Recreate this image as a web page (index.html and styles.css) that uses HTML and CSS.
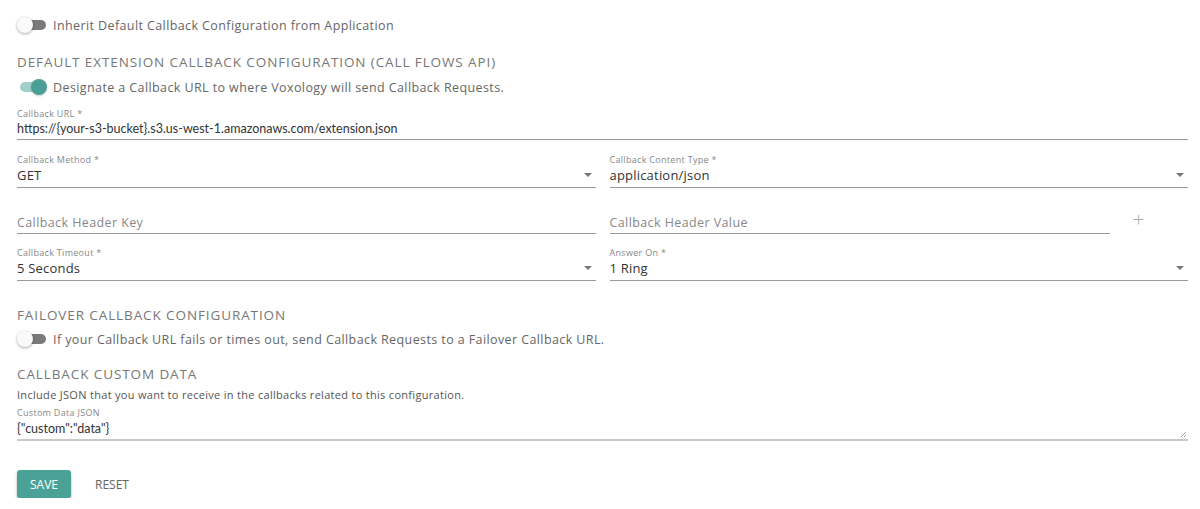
FILE: index.html
```html
<!DOCTYPE html>
<html>
<head>
    <title>Extension Callback Configuration</title>
    <link rel="stylesheet" href="styles.css">
</head>
<body>
<form class="page">
    <label class="switch-row first">
        <span class="switch"><span class="track"></span><span class="knob"></span></span>
        <span class="switch-text">Inherit Default Callback Configuration from Application</span>
    </label>

    <h2 class="section">Default Extension Callback Configuration (Call Flows API)</h2>
    <label class="switch-row">
        <span class="switch on"><span class="track"></span><span class="knob"></span></span>
        <span class="switch-text">Designate a Callback URL to where Voxology will send Callback Requests.</span>
    </label>

    <div class="field url">
        <div class="label">Callback URL *</div>
        <div class="value mono">https://{your-s3-bucket}.s3.us-west-1.amazonaws.com/extension.json</div>
    </div>

    <div class="row method">
        <div class="field select">
            <div class="label">Callback Method *</div>
            <div class="value">GET</div>
            <span class="caret"></span>
        </div>
        <div class="field select">
            <div class="label">Callback Content Type *</div>
            <div class="value">application/json</div>
            <span class="caret"></span>
        </div>
    </div>

    <div class="row header">
        <div class="field">
            <div class="value placeholder">Callback Header Key</div>
        </div>
        <div class="field-plus">
            <div class="field">
                <div class="value placeholder">Callback Header Value</div>
            </div>
            <span class="plus">+</span>
        </div>
    </div>

    <div class="row timeout">
        <div class="field select">
            <div class="label">Callback Timeout *</div>
            <div class="value">5 Seconds</div>
            <span class="caret"></span>
        </div>
        <div class="field select">
            <div class="label">Answer On *</div>
            <div class="value">1 Ring</div>
            <span class="caret"></span>
        </div>
    </div>

    <h2 class="section failover">Failover Callback Configuration</h2>
    <label class="switch-row">
        <span class="switch"><span class="track"></span><span class="knob"></span></span>
        <span class="switch-text">If your Callback URL fails or times out, send Callback Requests to a Failover Callback URL.</span>
    </label>

    <h2 class="section custom">Callback Custom Data</h2>
    <p class="hint">Include JSON that you want to receive in the callbacks related to this configuration.</p>
    <div class="field json">
        <div class="label">Custom Data JSON</div>
        <div class="value mono">{"custom":"data"}</div>
        <svg class="grip" width="7" height="7" viewBox="0 0 7 7"><path d="M6 1 L1 6 M6 4 L4 6" stroke="#999" stroke-width="1"/></svg>
    </div>

    <div class="actions">
        <button type="button" class="btn save">Save</button>
        <button type="button" class="btn reset">Reset</button>
    </div>
</form>
</body>
</html>
```

FILE: styles.css
```css
* { box-sizing: border-box; }
html, body { margin: 0; padding: 0; background: #fff; }
body { font-family: "Open Sans", sans-serif; color: #333; }

.page { display: flex; flex-direction: column; padding: 16px 12px 0 17px; }

/* switches */
.switch-row { display: flex; align-items: center; height: 18px; gap: 6px; }
.switch { position: relative; width: 30px; height: 18px; flex: none; }
.switch .track { position: absolute; left: 3px; top: 4px; width: 26px; height: 10px; border-radius: 5px; background: #7a7a7a; }
.switch .knob { position: absolute; left: 0; top: 1px; width: 16px; height: 16px; border-radius: 50%; background: #fafafa; box-shadow: 0 1px 3px rgba(0,0,0,0.35); }
.switch.on .track { background: #9fd1ca; }
.switch.on .knob { left: 14px; background: #4a9e94; box-shadow: 0 1px 2px rgba(0,0,0,0.2); }
.switch-text { font-size: 12.5px; color: #666; letter-spacing: 0.4px; }

.section { margin: 19px 0 7px; font-size: 13.5px; font-weight: 400; color: #777; text-transform: uppercase; letter-spacing: 0.9px; line-height: 18px; }
.section.failover { margin-top: 25px; margin-bottom: 6px; }
.section.custom { margin-top: 17px; margin-bottom: 2px; }

/* fields */
.field { position: relative; flex: 1; border-bottom: 1px solid #9a9a9a; padding-bottom: 1px; }
.field.select { padding-bottom: 3px; }
.label { font-size: 9px; color: #888; letter-spacing: 0.3px; line-height: 12px; }
.value { font-size: 13px; color: #333; line-height: 18px; letter-spacing: 0.2px; }
.value.mono { font-family: Lato, sans-serif; font-size: 12.5px; letter-spacing: 0; }
.value.placeholder { color: #888; font-size: 12.5px; letter-spacing: 0.4px; }
.field.url { margin-top: 12px; }

.row { display: flex; gap: 14px; }
.row .field { min-width: 0; }
.row.method { margin-top: 14px; }
.row.header { margin-top: 26px; }
.row.timeout { margin-top: 13px; }

.caret { position: absolute; right: 4px; top: 19px; border-left: 4px solid transparent; border-right: 4px solid transparent; border-top: 4px solid #777; }

.field-plus { flex: 1; display: flex; align-items: flex-end; }
.field-plus .field { flex: none; width: 500px; }
.plus { width: 58px; text-align: center; font-size: 20px; font-weight: 300; color: #aaa; line-height: 20px; align-self: flex-start; margin-top: -4px; }

.hint { margin: 3px 0 0; font-size: 11px; color: #555; letter-spacing: 0.3px; line-height: 14px; }
.field.json { margin-top: 5px; padding-bottom: 1px; border-bottom: 2px solid #c8c8c8; }
.field.json .label { margin-bottom: 1px; }
.grip { position: absolute; right: 1px; bottom: 1px; }

/* buttons */
.actions { display: flex; align-items: center; gap: 10px; margin-top: 29px; }
.btn { font-family: "Open Sans", sans-serif; text-transform: uppercase; font-size: 12px; border: 0; border-radius: 3px; height: 28px; padding: 0 12px; background: transparent; color: #666; }
.btn.save { width: 54px; padding: 0; background: #4aa297; color: #fff; box-shadow: 0 2px 3px rgba(0,0,0,0.3); }
.btn.reset { padding: 0 14px; }
```
